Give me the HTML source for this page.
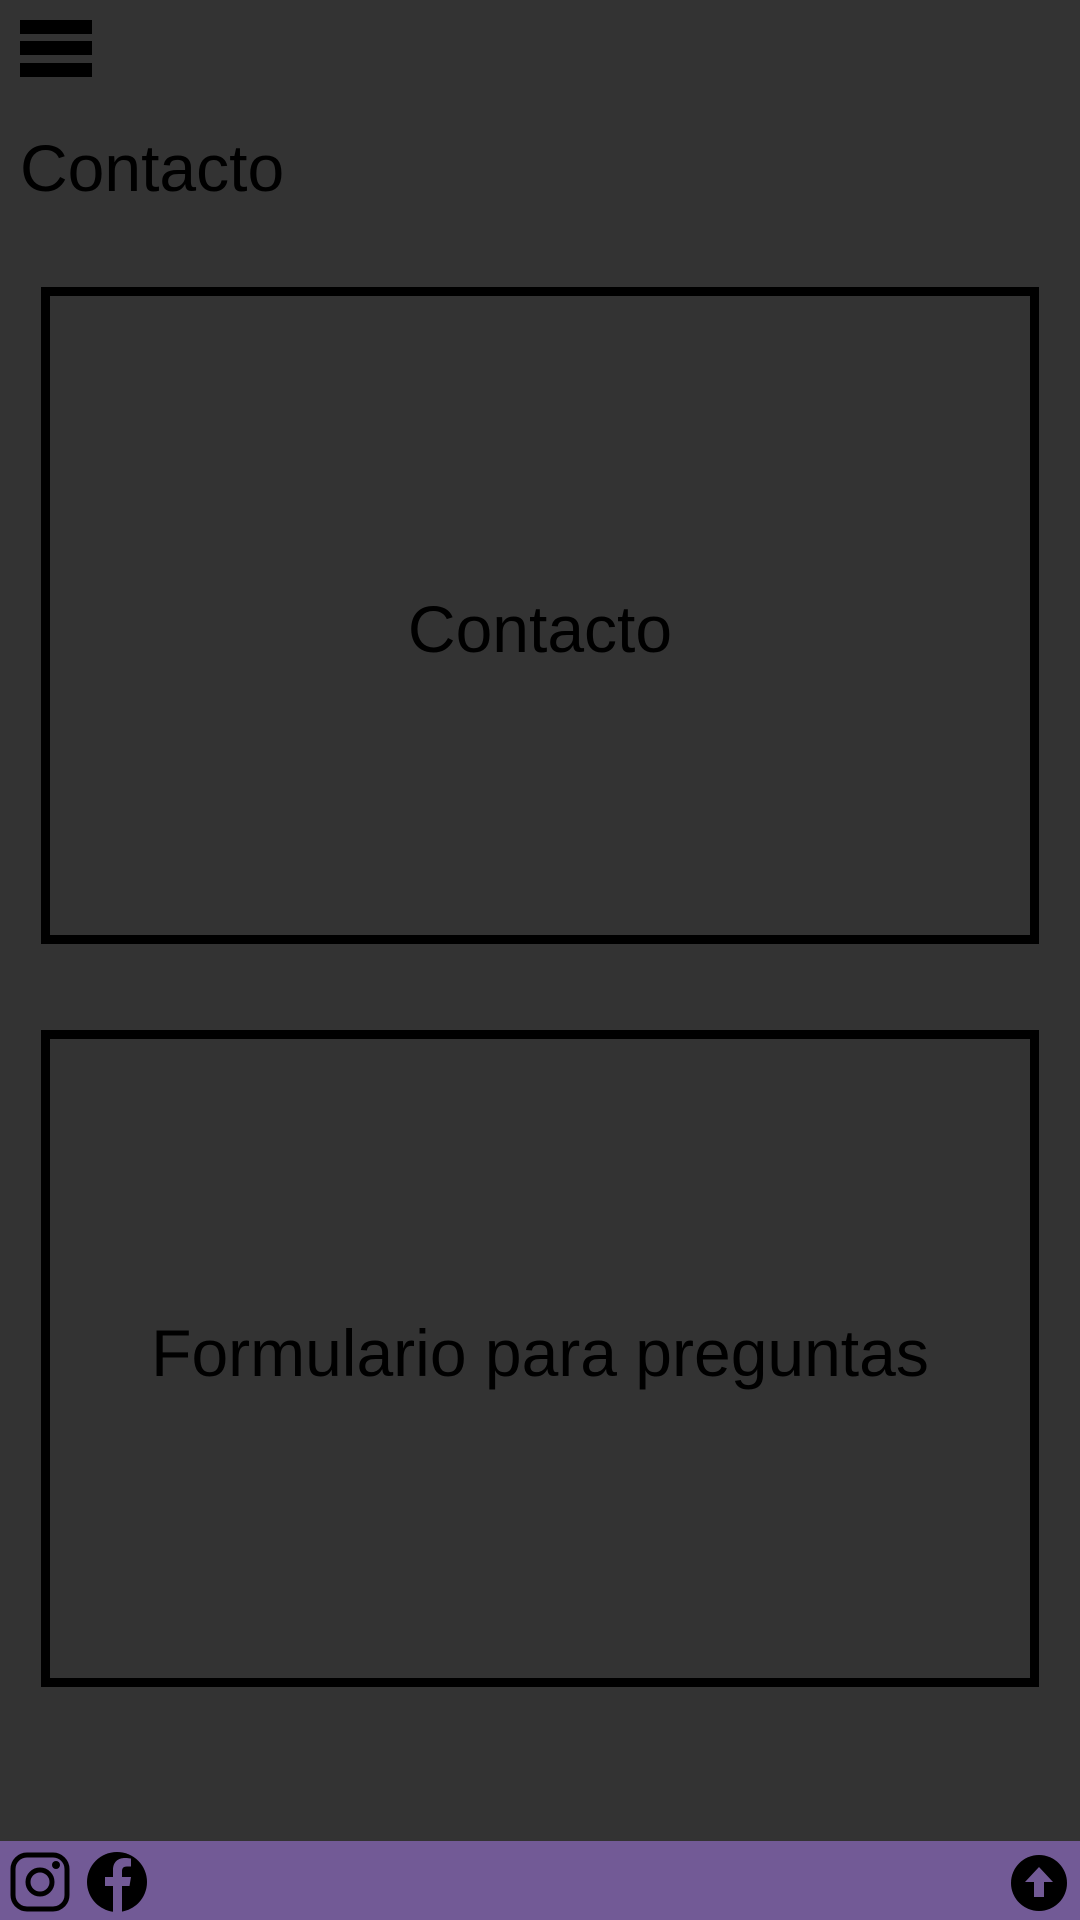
<!DOCTYPE html>
<html><head><meta charset="utf-8"><style>
html,body{margin:0;padding:0;width:1080px;height:1920px;background:#333;overflow:hidden;font-family:"Liberation Sans",sans-serif;color:#000}
.bar{position:absolute;left:20px;width:72px;height:14px;background:#000}
h1{position:absolute;left:20px;top:128px;margin:0;font-weight:normal;font-size:66px;line-height:80px}
.box{position:absolute;left:41px;width:980px;border:9px solid #000;display:flex;align-items:center;justify-content:center;font-size:66px;box-sizing:content-box}
footer{position:absolute;left:0;top:1841px;width:1080px;height:79px;background:#725a96}
</style></head><body>
<div class="bar" style="top:20px"></div>
<div class="bar" style="top:41px"></div>
<div class="bar" style="top:63px"></div>
<h1>Contacto</h1>
<div class="box" style="top:287px;height:613px;padding-top:26px">Contacto</div>
<div class="box" style="top:1030px;height:627px;padding-bottom:12px">Formulario para preguntas</div>
<footer>
<svg style="position:absolute;left:10px;top:11px" width="60" height="60" viewBox="0 0 60 60">
<rect x="3" y="3" width="54" height="54" rx="14" fill="none" stroke="#000" stroke-width="5"/>
<circle cx="30" cy="30" r="12" fill="none" stroke="#000" stroke-width="5"/>
<circle cx="46" cy="13" r="4" fill="#000"/>
</svg>
<svg style="position:absolute;left:87px;top:11px" width="60" height="60" viewBox="0 0 60 60">
<circle cx="30" cy="30" r="30" fill="#000"/>
<path d="M26 60V34h-8v-9h8v-7c0-8 5-12 12-12 3 0 6 .5 6 .5v8h-4c-4 0-5 2-5 5v5.5h9l-1.5 9H35V60z" fill="#725a96"/>
</svg>
<svg style="position:absolute;left:1011px;top:14px" width="56" height="56" viewBox="0 0 56 56">
<circle cx="28" cy="28" r="28" fill="#000"/>
<path d="M28 12L42 27H33V42H23V27H14Z" fill="#725a96"/>
</svg>
</footer>
</body></html>
